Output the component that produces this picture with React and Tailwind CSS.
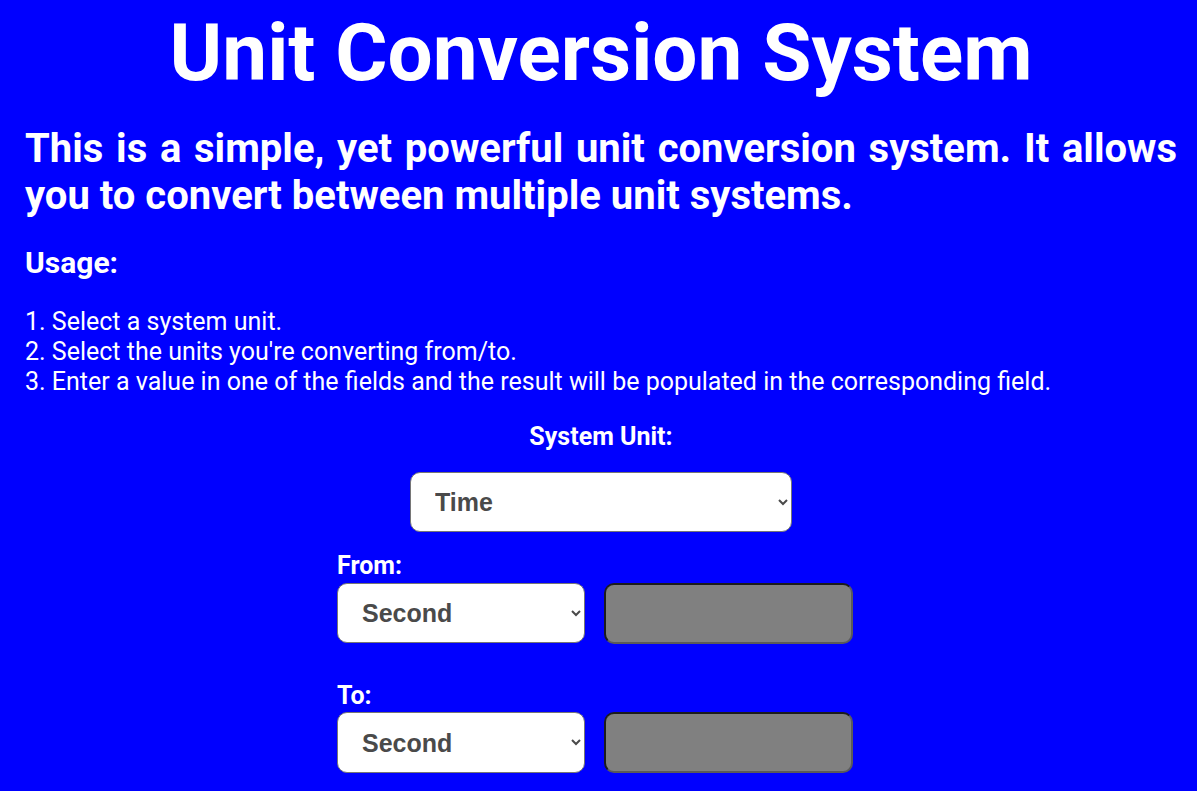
const App = () => {
  return (
    <div className="h-screen overflow-hidden bg-[#0000ff] pl-[25px] pr-[20px] pt-[6px] text-white font-['Roboto',sans-serif]">
      <h1 className="text-center text-[80px] font-bold leading-[94px]">Unit Conversion System</h1>

      <h2 className="mt-[25px] text-justify text-[40px] font-bold leading-[47px]">
        This is a simple, yet powerful unit conversion system. It allows you to convert between multiple unit systems.
      </h2>

      <h3 className="mt-[26px] text-[30px] font-bold leading-[35px]">Usage:</h3>

      <ol className="mt-[27px] text-[25px] leading-[30px]">
        <li>1. Select a system unit.</li>
        <li>2. Select the units you're converting from/to.</li>
        <li>3. Enter a value in one of the fields and the result will be populated in the corresponding field.</li>
      </ol>

      <div className="mt-[25px] flex flex-col items-center">
        <label className="text-[25px] font-bold leading-[30px]">System Unit:</label>
        <select
          defaultValue="time"
          className="mt-[20px] h-[60px] w-[382px] rounded-[10px] border border-[#767676] bg-white pl-[20px] pr-[8px] text-[25px] font-bold text-[#4a4a4a] font-['Liberation_Sans',Arial,sans-serif]"
        >
          <option value="time">Time</option>
          <option value="length">Length</option>
          <option value="mass">Mass</option>
        </select>

        <div className="mt-[19px] flex w-[528px] flex-col">
          <label className="text-[25px] font-bold leading-[30px]">From:</label>
          <div className="mt-[2px] flex gap-[19px]">
            <select
              defaultValue="second"
              className="h-[60px] w-[248px] rounded-[10px] border border-[#767676] bg-white pl-[20px] pr-[8px] text-[25px] font-bold text-[#4a4a4a] font-['Liberation_Sans',Arial,sans-serif]"
            >
              <option value="second">Second</option>
              <option value="minute">Minute</option>
              <option value="hour">Hour</option>
            </select>
            <input
              type="text"
              className="h-[61px] w-[249px] rounded-[10px] border-2 border-t-[#1c1c1c] border-l-[#1c1c1c] border-b-[#5a5a5a] border-r-[#5a5a5a] bg-[#808080] outline-none"
            />
          </div>

          <label className="mt-[37px] text-[25px] font-bold leading-[30px]">To:</label>
          <div className="mt-[1px] flex gap-[19px]">
            <select
              defaultValue="second"
              className="h-[61px] w-[248px] rounded-[10px] border border-[#767676] bg-white pl-[20px] pr-[8px] text-[25px] font-bold text-[#4a4a4a] font-['Liberation_Sans',Arial,sans-serif]"
            >
              <option value="second">Second</option>
              <option value="minute">Minute</option>
              <option value="hour">Hour</option>
            </select>
            <input
              type="text"
              className="h-[61px] w-[249px] rounded-[10px] border-2 border-t-[#1c1c1c] border-l-[#1c1c1c] border-b-[#5a5a5a] border-r-[#5a5a5a] bg-[#808080] outline-none"
            />
          </div>
        </div>
      </div>
    </div>
  );
};

export default App;
